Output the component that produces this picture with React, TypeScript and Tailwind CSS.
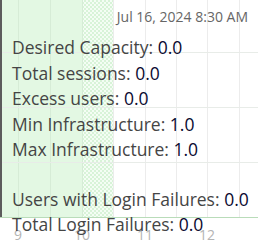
import React from 'react'

const rows: [string, string][] = [
  ['Desired Capacity', '0.0'],
  ['Total sessions', '0.0'],
  ['Excess users', '0.0'],
  ['Min Infrastructure', '1.0'],
  ['Max Infrastructure', '1.0'],
]

const failures: [string, string][] = [
  ['Users with Login Failures', '0.0'],
  ['Total Login Failures', '0.0'],
]

const gridX = [18, 50, 82, 113, 145, 176, 207, 239]
const gridY = [52, 107, 162]
const ticks = [
  { x: 18, label: '9' },
  { x: 82, label: '10' },
  { x: 145, label: '11' },
  { x: 207, label: '12' },
]

// chart drawing behind the tooltip
const ChartBackground = () => (
  <svg width="258" height="241" className="block">
    <defs>
      <pattern id="hatch" width="4" height="4" patternUnits="userSpaceOnUse">
        <rect width="4" height="4" fill="#f4fdf4" />
        <rect x="0" y="0" width="2" height="2" fill="#d8f3d8" />
        <rect x="2" y="2" width="2" height="2" fill="#d8f3d8" />
      </pattern>
    </defs>
    <rect x="0" y="0" width="258" height="241" fill="#ffffff" />
    <rect x="2" y="0" width="80" height="217" fill="#e3f8e3" />
    <rect x="82" y="0" width="31" height="217" fill="url(#hatch)" />
    {gridX.map((x) => (
      <rect key={x} x={x} y="0" width="1" height="217" fill={x < 113 ? '#d6ecd6' : '#ececec'} />
    ))}
    {gridY.map((y) => (
      <rect key={y} x="2" y={y} width="256" height="1" fill="#e8ece8" />
    ))}
    <rect x="0" y="0" width="2" height="217" fill="#5c5c5c" />
    <rect x="0" y="217" width="258" height="1" fill="#b9dcb9" />
    {ticks.map((t) => (
      <text
        key={t.label}
        x={t.x}
        y="240"
        textAnchor="middle"
        fontSize="14"
        fill="#b4b4b4"
        fontFamily="'Open Sans', sans-serif"
      >
        {t.label}
      </text>
    ))}
  </svg>
)

const Row = ({ label, value }: { label: string; value: string }) => (
  <div className="whitespace-nowrap">
    <span className="text-[#454545]">{label}: </span>
    <span className="text-[#0a0a30]">{value}</span>
  </div>
)

export default function App() {
  return (
    <div className="relative w-[258px] h-[241px] overflow-hidden bg-white font-['Open_Sans',sans-serif]">
      <ChartBackground />
      <div className="absolute inset-0 flex flex-col">
        <div className="pt-[7px] pr-[10px] text-right text-[14px] leading-[20px] text-[#666666]">
          Jul 16, 2024 8:30 AM
        </div>
        <div className="mt-[8px] pl-[12px] text-[17.5px] leading-[25.5px]">
          {rows.map(([l, v]) => (
            <Row key={l} label={l} value={v} />
          ))}
          <div className="h-[24px]" />
          {failures.map(([l, v]) => (
            <Row key={l} label={l} value={v} />
          ))}
        </div>
      </div>
    </div>
  )
}
